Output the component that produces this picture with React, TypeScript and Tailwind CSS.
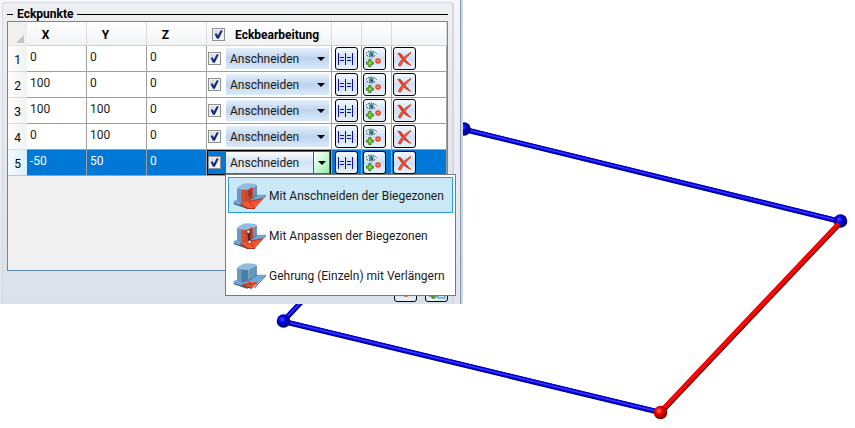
import { useState } from "react";

const FONT = "font-['Roboto','Open_Sans',sans-serif]";

const points = [
  { x: "0", y: "0", z: "0" },
  { x: "100", y: "0", z: "0" },
  { x: "100", y: "100", z: "0" },
  { x: "0", y: "100", z: "0" },
  { x: "-50", y: "50", z: "0" },
];

const menuItems = [
  { kind: "cut", label: "Mit Anschneiden der Biegezonen" },
  { kind: "fit", label: "Mit Anpassen der Biegezonen" },
  { kind: "miter", label: "Gehrung (Einzeln) mit Verlängern" },
];

function Check({ label }: { label: string }) {
  return (
    <span className="relative block size-[13px] shrink-0">
      <input
        type="checkbox"
        defaultChecked
        aria-label={label}
        className="peer block size-[13px] appearance-none border border-[#8e8f8f] bg-linear-to-br from-[#cfd3da] to-white shadow-[inset_0_0_0_1px_#f4f4f4]"
      />
      <svg
        viewBox="0 0 13 13"
        className="pointer-events-none invisible absolute inset-0 size-[13px] peer-checked:visible"
      >
        <path d="M2.6 6 4.6 5.2 5.8 7.4 8.8 2.2 10.8 2.4 6.8 10.8 5 10.8Z" fill="#112a80" />
      </svg>
    </span>
  );
}

function GapIcon() {
  return (
    <svg viewBox="0 0 21 21" className="size-[21px]" shapeRendering="crispEdges">
      <path
        d="M2.5 5V17M9.5 5V17M16.5 5V17M4 9.5H8M4 12.5H8M11 9.5H15M11 12.5H15"
        stroke="#10109c"
        fill="none"
      />
    </svg>
  );
}

function EyeIcon() {
  return (
    <svg viewBox="0 0 21 21" className="size-[21px]">
      <path d="M2 6Q7 1 12.5 6Q7 10.5 2 6Z" fill="#fff" />
      <path
        d="M2 5.5Q7 .8 12.5 5.5M2.5 7Q7 10.8 12 7"
        stroke="#222"
        fill="none"
        strokeDasharray="1.6 1"
      />
      <circle cx="7.3" cy="6" r="2.6" fill="#3fa09a" />
      <circle cx="7.8" cy="6.6" r="1.2" fill="#1d4f9c" />
      <path
        d="M4.8 11.5H7V14H9.3V16.2H7V18.6H4.8V16.2H2.5V14H4.8Z"
        fill="#8ad83a"
        stroke="#2f6d16"
        strokeWidth=".9"
      />
      <circle cx="14" cy="13" r="2.8" fill="#ea4a2c" />
      <circle cx="14" cy="13" r="1" fill="#ffb09f" />
    </svg>
  );
}

function DeleteIcon() {
  return (
    <svg viewBox="0 0 21 21" className="size-[21px]">
      <path
        d="M3.6 5.4Q6 4 7.8 6.8Q10.8 11.8 17 17.4Q12 16.4 6.6 9.4Q5 6.4 3.6 5.4Z"
        fill="#e2391f"
        stroke="#cc3a22"
        strokeWidth=".6"
      />
      <path
        d="M16.4 4.4Q17.6 4.6 16.8 5.4Q12 9.5 9.4 13.5Q7.8 16 6.8 18Q5 18.4 4.2 17.2Q5.6 14 8.2 11Q12 6.8 16.4 4.4Z"
        fill="#ec5036"
        stroke="#cc3a22"
        strokeWidth=".6"
      />
    </svg>
  );
}

function BendIcon({ kind }: { kind: string }) {
  const red = kind !== "miter";
  return (
    <svg viewBox="0 0 102 81" className="h-[27px] w-[34px] shrink-0">
      <path d="M2 54 14 50 60 42 62 35 99 35 62 73 44 74 2 59Z" fill="#6fa8d8" />
      <path d="M2 59 44 73V78L2 64Z" fill="#3d6e98" />
      <path d="M99 35V39L64 77V73Z" fill="#3d6e98" />
      {red ? (
        <>
          <path d="M22 60 46 52 92 46 66 74 43 74Z" fill="#f4552e" />
          <path d="M22 60 43 74H66V78H42L22 65Z" fill="#a93220" />
          <path d="M48 56 64 74M48 56 88 47" stroke="#8d2a1d" strokeWidth="2" fill="none" />
        </>
      ) : (
        <>
          <path d="M27 65 48 56 75 59 57 74Z" fill="#f4552e" />
          <path d="M27 65 57 74V78L27 69Z" fill="#8d2a1d" />
          <path d="M48 56 57 75M30 66 72 60" stroke="#8d2a1d" strokeWidth="2" />
        </>
      )}
      <path d="M13 14Q15 9 32 2Q40 0 60 2Q70 3 70 7L48 18Q30 20 13 14Z" fill="#8fbbe0" />
      <path d="M13 14Q24 19 46 19V54L28 59Q18 58 13 51Z" fill="#4c7ba3" />
      <path d="M13 15 26 19V59Q16 56 13 51Z" fill="#6799c4" />
      <path d="M46 19 70 7V38L46 54Z" fill="#6697c0" />
      <path d="M14 15Q24 19 45 19L69 8" stroke="#b0d0ea" strokeWidth="2" fill="none" />
      <path d="M70 7V38L46 54" stroke="#3d6587" strokeWidth="2" fill="none" />
      {red && (
        <>
          <path d="M26 22 46 20V54L26 60Z" fill="#dc4a2c" />
          <path d="M46 20Q52 12 60 14V44L46 54Z" fill="#c23d29" />
          <path d="M40 21V56" stroke="#b03523" strokeWidth="2" />
          <path d="M46 22Q54 20 54 32Q52 42 47 40Q44 30 46 22Z" fill="#6d2a24" />
          <path d="M49 24V36" stroke="#e26a50" strokeWidth="2" />
        </>
      )}
      {kind === "fit" && (
        <>
          <path d="M46 30 50 56" stroke="#111" strokeWidth="6" strokeDasharray="5 3" />
          <circle cx="46" cy="26" r="5" fill="#fff" stroke="#222" strokeWidth="2" />
          <circle cx="50" cy="57" r="5" fill="#fff" stroke="#222" strokeWidth="2" />
        </>
      )}
    </svg>
  );
}

const toolButton =
  "block size-[23px] rounded-[3px] border border-black bg-linear-to-b from-[#f4f9fe] via-[#cfe0f2] to-[#e6f1fb]";

function EdgeSelect({ row, open }: { row: number; open: boolean }) {
  return (
    <div className="relative h-[21px] w-[103px]">
      <select
        aria-label={`Eckbearbeitung ${row}`}
        className={`block h-full w-full appearance-none bg-linear-to-b pl-1 text-xs text-[#1a1a1a] outline-none ${
          open
            ? "from-[#fafcfe] via-[#d5e3f4] to-[#e4f0fb]"
            : "from-[#e6f1fb] via-[#bdd3ee] to-[#dcebf9]"
        }`}
      >
        <option>Anschneiden</option>
        <option>Anpassen</option>
        <option>Gehrung</option>
      </select>
      <span
        className={`pointer-events-none absolute inset-y-0 right-0 flex w-4 items-center justify-center ${
          open ? "border-l border-[#e01b24] bg-linear-to-br from-white to-[#8ff0b0]" : ""
        }`}
      >
        <svg viewBox="0 0 8 4" className="h-1 w-2">
          <path d="M0 0H8L4 4Z" fill="#000" />
        </svg>
      </span>
      {open && <EdgeMenu />}
    </div>
  );
}

function EdgeMenu() {
  const [active, setActive] = useState(0);
  return (
    <div className="absolute top-[22px] -left-px z-10 flex w-[231px] flex-col gap-1 border border-[#7a7a7a] bg-white p-0.5">
      {menuItems.map((item, idx) => (
        <button
          key={item.kind}
          type="button"
          onMouseEnter={() => setActive(idx)}
          className={`flex h-9 items-center gap-0.5 border pt-0.5 pl-1 text-xs whitespace-nowrap text-[#1a1a1a] ${
            idx === active ? "border-[#26a0da] bg-[#cbe8f6]" : "border-transparent"
          }`}
        >
          <BendIcon kind={item.kind} />
          {item.label}
        </button>
      ))}
    </div>
  );
}

function PointsTable() {
  const selected = points.length - 1;
  const th =
    "border-r border-b border-r-[#dcdcdc] border-b-[#cfcfcf] p-0 pr-[22px] pt-0.5 font-bold";
  return (
    <table className="w-full table-fixed border-separate border-spacing-0 text-xs leading-4">
      <colgroup>
        <col className="w-[19px]" />
        <col className="w-[60px]" />
        <col className="w-[60px]" />
        <col className="w-[60px]" />
        <col className="w-[125px]" />
        <col className="w-[30px]" />
        <col className="w-[30px]" />
        <col />
      </colgroup>
      <thead>
        <tr className="h-6 bg-linear-to-b from-white to-[#f1f2f4]">
          <th className="border-b border-[#e4e4e4] bg-[#f0f0f0] p-0 align-bottom">
            <svg viewBox="0 0 8 8" className="mb-0.5 ml-2 size-2">
              <path d="M8 0V8H0Z" fill="#c4c4c4" />
            </svg>
          </th>
          <th className={th}>X</th>
          <th className={th}>Y</th>
          <th className={th}>Z</th>
          <th className="border-r border-b border-r-[#dcdcdc] border-b-[#cfcfcf] p-0 pt-0.5">
            <div className="flex items-center gap-2.5 pl-[5px]">
              <Check label="Alle" />
              Eckbearbeitung
            </div>
          </th>
          <th className={th}></th>
          <th className={th}></th>
          <th className={th}></th>
        </tr>
      </thead>
      <tbody>
        {points.map((p, idx) => {
          const on = idx === selected;
          const cell = `border-r border-b border-[#a0a0a0] p-0 ${
            on ? "bg-[#0078d7] text-white" : "bg-white text-[#1a1a1a]"
          }`;
          return (
            <tr key={idx} className="h-[26px]">
              <th
                className={`border-b p-0 pt-0.5 text-center font-normal ${
                  on
                    ? "border-[#8fd8f5] bg-linear-to-r from-[#f4fbfe] to-[#dcf1fa]"
                    : "border-[#dcdcdc] bg-linear-to-r from-white to-[#f1f2f4]"
                }`}
              >
                {idx + 1}
              </th>
              {[p.x, p.y, p.z].map((val, i) => (
                <td key={i} className={`${cell} pb-1 pl-[3px] align-middle`}>
                  {val}
                </td>
              ))}
              <td className={`${cell} ${on ? "shadow-[inset_0_0_0_1px_#000]" : ""}`}>
                <div className="flex items-center gap-[5px] pl-px">
                  <Check label={`Ecke ${idx + 1}`} />
                  <EdgeSelect row={idx + 1} open={on} />
                </div>
              </td>
              <td className={cell}>
                <button type="button" aria-label="Abstand" className={`${toolButton} ml-[3px]`}>
                  <GapIcon />
                </button>
              </td>
              <td className={cell}>
                <button type="button" aria-label="Punkt zeigen" className={`${toolButton} ml-px`}>
                  <EyeIcon />
                </button>
              </td>
              <td className={cell}>
                <button type="button" aria-label="Löschen" className={`${toolButton} ml-px`}>
                  <DeleteIcon />
                </button>
              </td>
            </tr>
          );
        })}
      </tbody>
    </table>
  );
}

function Rod({ d, red }: { d: string; red?: boolean }) {
  return (
    <g fill="none">
      <path
        d={d}
        stroke={red ? "#5a0000" : "#000064"}
        strokeWidth="5"
        transform={red ? "translate(.7 .7)" : "translate(0 .5)"}
      />
      <path d={d} stroke={red ? "#f00000" : "#0000d0"} strokeWidth="4.6" />
      <path d={d} stroke={red ? "#ff0c0c" : "#3838ff"} strokeWidth="1.4" />
    </g>
  );
}

function Scene() {
  return (
    <svg
      viewBox="0 0 855 428"
      preserveAspectRatio="xMinYMin meet"
      className="absolute inset-0 h-full w-full"
    >
      <defs>
        <radialGradient id="blueBall" cx=".4" cy=".38" r=".65">
          <stop offset="0" stopColor="#4a4aff" />
          <stop offset=".4" stopColor="#0000e0" />
          <stop offset="1" stopColor="#000058" />
        </radialGradient>
        <radialGradient id="redBall" cx=".4" cy=".38" r=".65">
          <stop offset="0" stopColor="#ff6a6a" />
          <stop offset=".4" stopColor="#f00000" />
          <stop offset="1" stopColor="#6a0000" />
        </radialGradient>
      </defs>
      <Rod d="M283 321 464 129" />
      <Rod d="M464 129 840 221" />
      <Rod d="M283 321 660 412" />
      <circle cx="464" cy="129" r="6.8" fill="url(#blueBall)" />
      <circle cx="283.5" cy="321" r="6.8" fill="url(#blueBall)" />
      <circle cx="840.5" cy="221" r="6.8" fill="url(#blueBall)" />
      <Rod d="M838.5 223.5 660 412" red />
      <circle cx="660.5" cy="412.5" r="6.8" fill="url(#redBall)" />
    </svg>
  );
}

export default function App() {
  return (
    <div className={`relative min-h-screen bg-white ${FONT}`}>
      <Scene />
      <main className="relative flex w-[463px] border-r-2 border-[#c9d9ee] bg-linear-to-b from-[#f3f5fa] to-[#dfe4ee] pl-0.5">
        <section className="mt-0.5 grow rounded-t border-t border-r-2 border-l border-[#d5d8dd] bg-linear-to-b from-[#eeeff1] to-[#dbe1ea] px-1">
          <div className="flex h-[18px] items-center gap-1 pt-1">
            <span className="h-px w-1.5 bg-black"></span>
            <h1 className="text-xs leading-4 font-bold">Eckpunkte</h1>
            <span className="h-px grow bg-black"></span>
          </div>
          <div className="min-h-[250px] border border-[#5f8ab5] bg-[#f0f0f0]">
            <PointsTable />
          </div>
          <div className="flex h-[33px] items-end justify-end gap-2 pb-0.5">
            <button type="button" aria-label="Punkt" className={toolButton}>
              <svg viewBox="0 0 21 21" className="size-[21px]">
                <circle cx="11" cy="14" r="3" fill="#ea6a3a" />
              </svg>
            </button>
            <button type="button" aria-label="Hinzufügen" className={toolButton}>
              <svg viewBox="0 0 21 21" className="size-[21px]">
                <rect x="12" y="11" width="7" height="7" fill="#bfe4fa" stroke="#2a95d5" />
                <path d="M6 11H9V14H12V16H9V18H6V16H3V14H6Z" fill="#6cc02c" stroke="#2f6d16" />
              </svg>
            </button>
          </div>
        </section>
        <div className="ml-1.5 border-r border-[#8f94a2]"></div>
      </main>
    </div>
  );
}
